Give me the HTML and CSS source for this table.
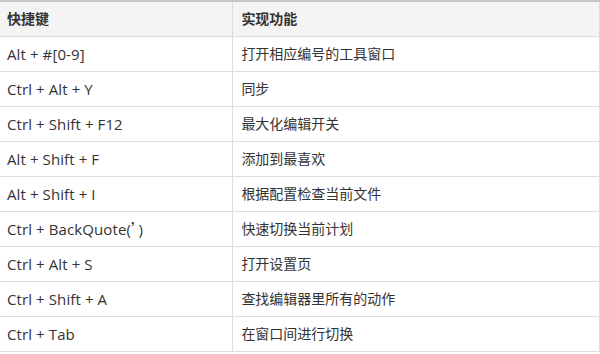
FILE: index.html
```html
<!DOCTYPE html>
<html lang="zh-CN">
<head>
<meta charset="utf-8">
<link rel="stylesheet" href="styles.css">
</head>
<body>
<table class="keys">
  <thead>
    <tr><th class="c1">快捷键</th><th class="c2">实现功能</th></tr>
  </thead>
  <tbody>
    <tr><td class="c1">Alt + #[0-9]</td><td class="c2">打开相应编号的工具窗口</td></tr>
    <tr><td class="c1">Ctrl + Alt + Y</td><td class="c2">同步</td></tr>
    <tr><td class="c1">Ctrl + Shift + F12</td><td class="c2">最大化编辑开关</td></tr>
    <tr><td class="c1">Alt + Shift + F</td><td class="c2">添加到最喜欢</td></tr>
    <tr><td class="c1">Alt + Shift + I</td><td class="c2">根据配置检查当前文件</td></tr>
    <tr><td class="c1">Ctrl + BackQuote(<span class="cjk">’</span>)</td><td class="c2">快速切换当前计划</td></tr>
    <tr><td class="c1">Ctrl + Alt + S</td><td class="c2">打开设置页</td></tr>
    <tr><td class="c1">Ctrl + Shift + A</td><td class="c2">查找编辑器里所有的动作</td></tr>
    <tr><td class="c1">Ctrl + Tab</td><td class="c2">在窗口间进行切换</td></tr>
  </tbody>
</table>
</body>
</html>
```
FILE: styles.css
```css
html, body {
  margin: 0;
  padding: 0;
  background: #ffffff;
}
.keys {
  width: 600px;
  border-collapse: collapse;
  table-layout: fixed;
  font-family: "Open Sans", "Noto Sans CJK SC", sans-serif;
  font-size: 14px;
  color: #333333;
  border-top: 2px solid #c6c6c6;
}
.keys th, .keys td {
  height: 34.1px;
  padding: 0 8px;
  text-align: left;
  vertical-align: middle;
  border-bottom: 1px solid #dddddd;
  border-right: 1px solid #dddddd;
  white-space: nowrap;
  line-height: 20px;
}
.keys th {
  height: 33.5px;
  background: #f4f4f4;
  font-weight: bold;
  font-size: 14px;
}
.keys .c1 {
  width: 217px;
  padding-left: 7px;
}
.keys td.c1 {
  font-size: 15px;
  letter-spacing: 0.1px;
}
.keys .c2 {
  width: 349px;
}
.keys .cjk {
  font-family: "Noto Sans CJK SC", sans-serif;
}
```
